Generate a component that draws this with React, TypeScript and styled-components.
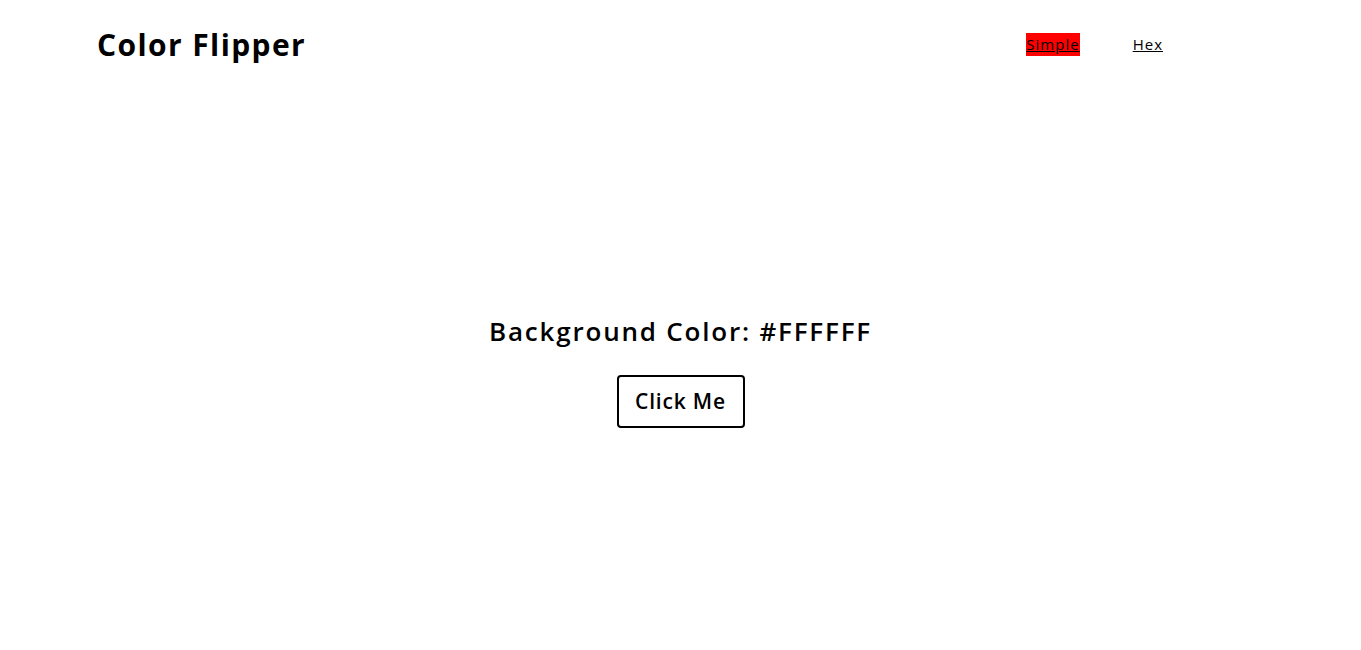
import React from "react";
import styled, { createGlobalStyle } from "styled-components";

const Global = createGlobalStyle`
  * { box-sizing: border-box; }
  html, body { margin: 0; padding: 0; background: #ffffff; }
  body { font-family: "Open Sans", "Liberation Sans", sans-serif; color: #000; }
`;

const Page = styled.div`
  display: flex;
  flex-direction: column;
  min-height: 100vh;
`;

const Nav = styled.nav`
  display: flex;
  align-items: center;
  justify-content: space-between;
  height: 88px;
  padding: 0 198px 0 97px;
`;

const Brand = styled.h1`
  margin: 0;
  font-size: 30px;
  font-weight: 700;
  letter-spacing: 1.4px;
`;

const Links = styled.ul`
  display: flex;
  gap: 53px;
  list-style: none;
  margin: 0;
  padding: 0;
`;

const NavLink = styled.a<{ $active?: boolean }>`
  display: block;
  font-size: 15px;
  line-height: 23px;
  letter-spacing: 1px;
  color: #000;
  text-decoration: underline;
  background: ${(p) => (p.$active ? "#ff0000" : "transparent")};
`;

const Main = styled.main`
  flex: 1;
  display: flex;
  flex-direction: column;
  align-items: center;
  justify-content: center;
  padding-top: 2px;
`;

const Heading = styled.h2`
  margin: 0 0 26px;
  font-size: 26px;
  font-weight: 600;
  letter-spacing: 1.8px;
`;

const Button = styled.button`
  font-family: inherit;
  font-size: 21px;
  font-weight: 600;
  letter-spacing: 0.8px;
  color: #000;
  background: transparent;
  border: 2px solid #000;
  border-radius: 4px;
  width: 128px;
  height: 53px;
  cursor: pointer;
`;

export default function App() {
  return (
    <Page>
      <Global />
      <Nav>
        <Brand>Color Flipper</Brand>
        <Links>
          <li>
            <NavLink href="#" $active>Simple</NavLink>
          </li>
          <li>
            <NavLink href="#">Hex</NavLink>
          </li>
        </Links>
      </Nav>
      <Main>
        <Heading>Background Color: #FFFFFF</Heading>
        <Button>Click Me</Button>
      </Main>
    </Page>
  );
}
